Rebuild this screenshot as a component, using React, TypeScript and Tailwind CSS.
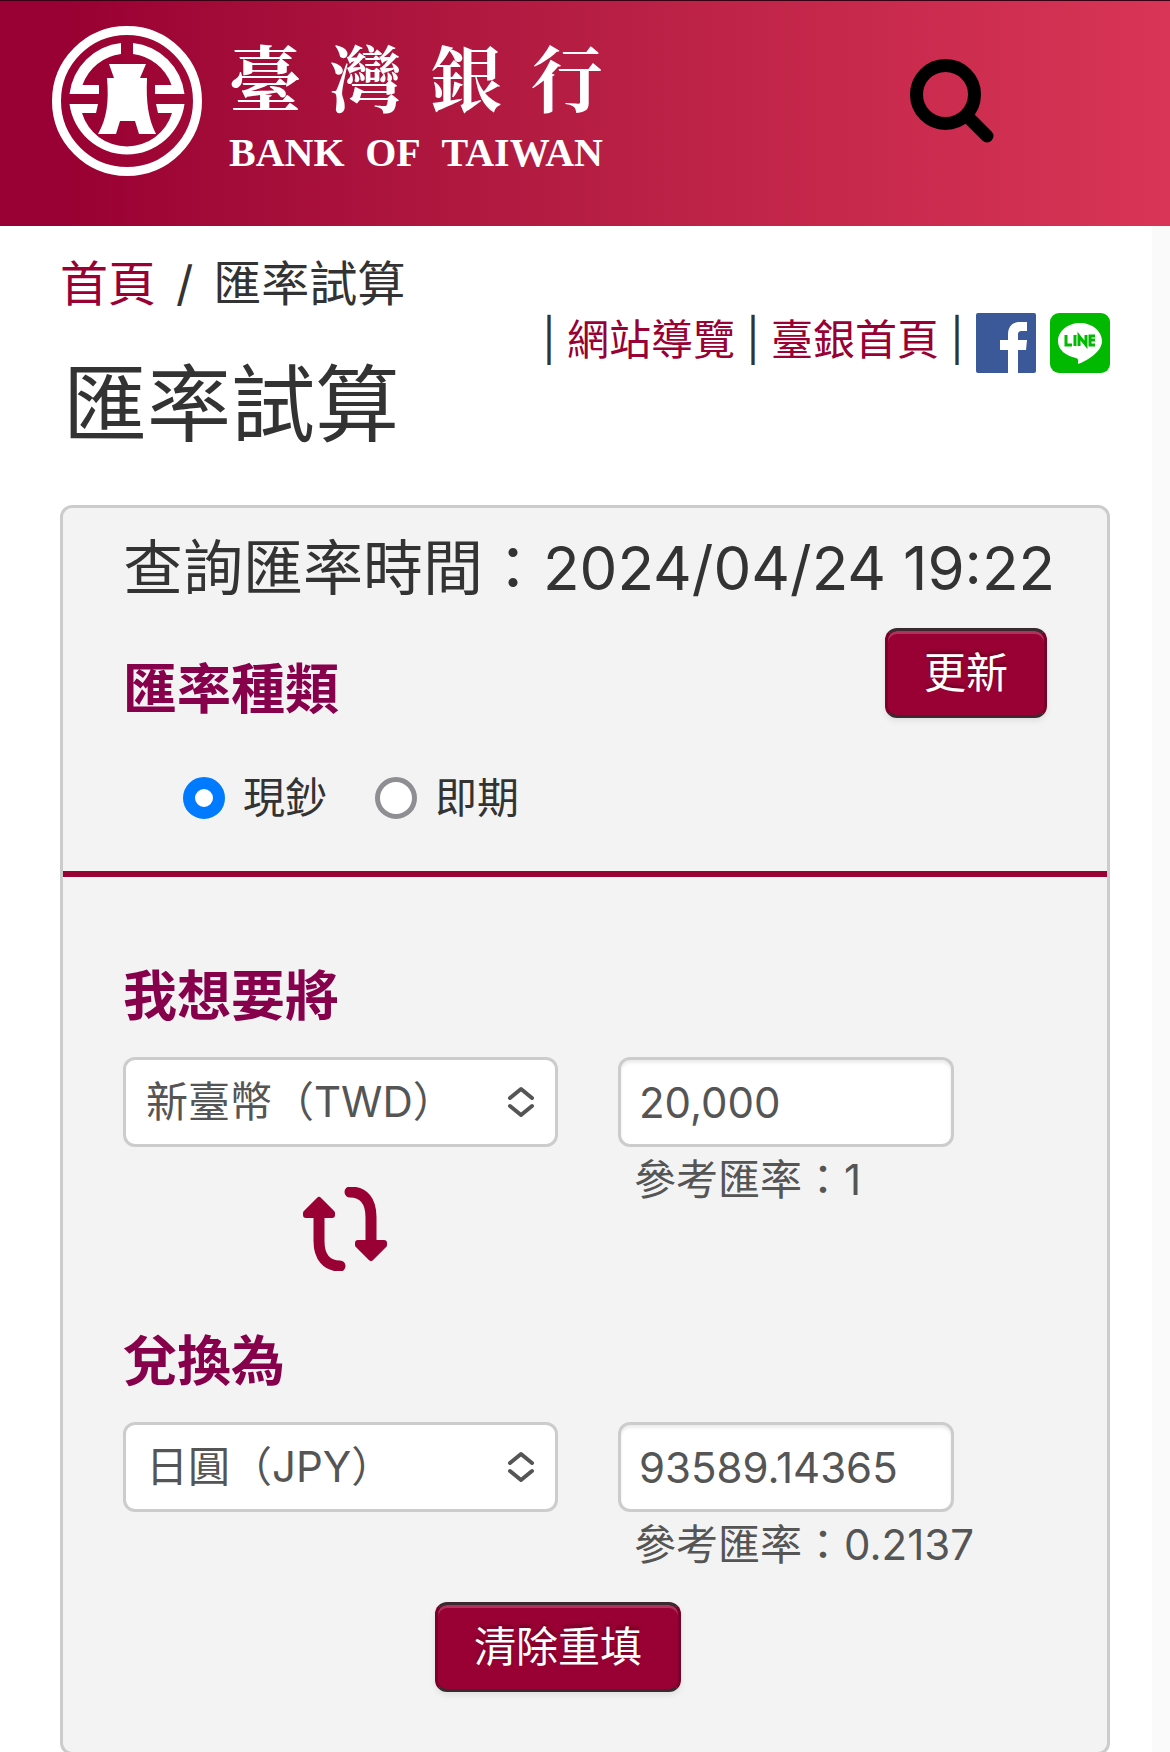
import { useState } from "react";
import type { ReactNode } from "react";

const currencies = ["新臺幣（TWD）", "日圓（JPY）"];

function BankEmblem() {
  return (
    <svg viewBox="0 0 152 150" className="h-[150px] w-[152px] shrink-0" fill="#fff" aria-hidden="true">
      <circle cx="76" cy="75" r="70.500" fill="none" stroke="#fff" strokeWidth="9" />
      {/* broken inner ring */}
      <path d="M70 17 A58 58 0 0 0 18.500 68 H48 V59 H31.500 A47 47 0 0 1 70 28 Z" />
      <path d="M82 17 A58 58 0 0 1 133.500 68 H104 V59 H120.500 A47 47 0 0 0 82 28 Z" />
      <path d="M18.500 78 H47 L45 87 H31 A47 47 0 0 0 121 87 H107 L105 78 H133.500 A58 58 0 0 1 18.500 78 Z" />
      {/* spade coin */}
      <path d="M58 38 H95 L89 52 H96 C95 76 97 92 105 108 H88 L84 95 H69 L65 108 H47 C56 92 58 76 56 52 H63 Z" />
    </svg>
  );
}

function SearchIcon() {
  return (
    <svg viewBox="0 0 84 84" className="h-[84px] w-[84px]" aria-hidden="true">
      <circle cx="35.500" cy="35.500" r="29" fill="none" stroke="#000" strokeWidth="13" />
      <path d="M57 57 L77 77" stroke="#000" strokeWidth="13" strokeLinecap="round" />
    </svg>
  );
}

function FacebookIcon() {
  return (
    <svg viewBox="0 0 60 60" className="h-[60px] w-[60px]" aria-hidden="true">
      <rect width="60" height="60" rx="2" fill="#3b5998" />
      <path
        fill="#fff"
        d="M32 60 V37 H24 V27 H32 V22 C32 13 37 9 44 9 H51 V18 H46 C43 18 42 19 42 22 V27 H51 L50 37 H42 V60 Z"
      />
    </svg>
  );
}

function LineIcon() {
  return (
    <svg viewBox="0 0 60 60" className="h-[60px] w-[60px]" aria-hidden="true">
      <rect width="60" height="60" rx="9" fill="#00b900" />
      <path
        fill="#fff"
        d="M30 10 C18 10 8 18 8 28 C8 37 16 43 26 45 C29 46 28 48 28 51 C34 49 52 40 52 28 C52 18 42 10 30 10 Z"
      />
      <g fill="none" stroke="#00b900" strokeWidth="3">
        <path d="M16 22 V32 H22" />
        <path d="M25 22 V33" />
        <path d="M29 33 V23 L36 32 V22" />
        <path d="M45 23 H40 V32 H45 M40 27 H45" />
      </g>
    </svg>
  );
}

function SwapIcon() {
  return (
    <svg viewBox="0 0 84 84" className="h-[84px] w-[84px]" aria-hidden="true">
      <g fill="none" stroke="#990033" strokeWidth="11" strokeLinecap="round">
        <path d="M16 26 V54 C16 70 24 79 37 79" />
        <path d="M47 5 C61 5 68 14 68 30 V58" />
      </g>
      <g fill="#990033" stroke="#990033" strokeWidth="6" strokeLinejoin="round">
        <path d="M16 13 L29 26 V28 H3 V26 Z" />
        <path d="M68 71 L81 58 V56 H55 V58 Z" />
      </g>
    </svg>
  );
}

function ActionButton({ children }: { children: ReactNode }) {
  return (
    <button
      type="button"
      className="h-[90px] rounded-xl border-[3px] border-x-[#7a0029] border-y-[#3a2a30] bg-[#990033] px-9 text-[42px] leading-[60px] text-white shadow-[inset_0_3px_0_rgba(255,255,255,0.2),0_3px_6px_rgba(0,0,0,0.08)] [text-shadow:0_-3px_3px_rgba(0,0,0,0.25)]"
    >
      {children}
    </button>
  );
}

function SectionTitle({ children }: { children: ReactNode }) {
  return <h2 className="text-[54px] leading-[60px] font-bold text-[#86004c]">{children}</h2>;
}

type CurrencyRowProps = {
  id: string;
  label: string;
  currency: string;
  amount: string;
  rate: string;
  children?: ReactNode;
};

function CurrencyRow({ id, label, currency, amount, rate, children }: CurrencyRowProps) {
  const [selected, setSelected] = useState(currency);
  const [value, setValue] = useState(amount);

  return (
    <div className="flex items-start gap-[60px] text-[#555]">
      <div className="flex w-[435px] flex-col gap-10">
        <div className="relative">
          <select
            id={`${id}-currency`}
            aria-label={`${label} 幣別`}
            value={selected}
            onChange={(e) => setSelected(e.target.value)}
            className="block h-[90px] w-full appearance-none rounded-xl border-[3px] border-[#ccc] bg-white px-5 text-[42px] leading-[60px]"
          >
            {currencies.map((name) => (
              <option key={name}>{name}</option>
            ))}
          </select>
          <svg
            viewBox="0 0 28 32"
            className="pointer-events-none absolute top-[29px] right-[23px] h-8 w-7"
            fill="none"
            stroke="#555"
            strokeWidth="4"
            strokeLinecap="round"
            strokeLinejoin="round"
            aria-hidden="true"
          >
            <path d="M3 12 L14 3 L25 12" />
            <path d="M3 20 L14 29 L25 20" />
          </svg>
        </div>
        {children}
      </div>
      <div>
        <input
          id={`${id}-amount`}
          aria-label={`${label} 金額`}
          type="text"
          value={value}
          onChange={(e) => setValue(e.target.value)}
          className="block h-[90px] w-[336px] rounded-xl border-[3px] border-[#ccc] bg-white px-[18px] text-[42px] leading-[60px] shadow-[inset_0_3px_3px_rgba(0,0,0,0.075)]"
        />
        <p className="pl-4 text-[42px] leading-[66px] whitespace-nowrap">參考匯率：{rate}</p>
      </div>
    </div>
  );
}

export default function App() {
  const [kind, setKind] = useState("cash");
  const radio =
    "h-[42px] w-[42px] appearance-none rounded-full border-[5px] border-[#8e8e93] bg-white checked:border-12 checked:border-[#007aff]";

  return (
    <div className="min-h-screen bg-white font-['Inter','Noto_Sans_CJK_TC',sans-serif] text-[#333]">
      <header className="flex h-[226px] items-start justify-between border-t border-[#3a0014] bg-linear-to-r from-[#990033] from-5% to-[#d93556] pt-[25px] pr-44 pl-[51px]">
        <a href="#" className="flex items-start gap-[26px] text-white" aria-label="臺灣銀行 BANK OF TAIWAN">
          <BankEmblem />
          <div className="w-[374px]">
            <div className="flex justify-between font-['Noto_Serif_CJK_TC','Noto_Sans_CJK_TC',serif] text-[72px] leading-[98px] font-bold">
              <span>臺</span>
              <span>灣</span>
              <span>銀</span>
              <span>行</span>
            </div>
            <div className="flex justify-between font-['Liberation_Serif',serif] text-[40px] leading-[58px] font-bold">
              <span>BANK</span>
              <span>OF</span>
              <span>TAIWAN</span>
            </div>
          </div>
        </a>
        <button type="button" aria-label="搜尋" className="mt-[33px]">
          <SearchIcon />
        </button>
      </header>

      <main className="border-r-[18px] border-[#fafafa] pr-[42px] pl-[60px]">
        <nav className="pt-[25px] text-[48px] leading-[66px]" aria-label="麵包屑">
          <a href="#" className="text-[#990033]">首頁</a>
          <span className="px-5">/</span>
          <span>匯率試算</span>
        </nav>

        <div className="flex items-start justify-between pb-[46px]">
          <h1 className="pt-[34px] pl-[3px] text-[84px] leading-[108px]">匯率試算</h1>
          <div className="-mt-1 flex items-start gap-3 text-[42px] leading-[54px]">
            <div className="flex gap-[11px]">
              <span>|</span>
              <a href="#" className="text-[#990033]">網站導覽</a>
              <span>|</span>
              <a href="#" className="text-[#990033]">臺銀首頁</a>
              <span>|</span>
            </div>
            <div className="flex gap-[14px]">
              <a href="#" aria-label="Facebook"><FacebookIcon /></a>
              <a href="#" aria-label="LINE"><LineIcon /></a>
            </div>
          </div>
        </div>

        <section className="rounded-xl border-[3px] border-[#ccc] bg-[#f3f3f3]">
          <div className="flex flex-col border-b-[6px] border-[#990033] px-[60px] pb-[43px]">
            <p className="pt-[21px] text-[60px] leading-[78px] whitespace-nowrap">查詢匯率時間：2024/04/24 19:22</p>
            <div className="flex items-start justify-between pt-[21px]">
              <div className="pt-8">
                <SectionTitle>匯率種類</SectionTitle>
              </div>
              <ActionButton>更新</ActionButton>
            </div>
            <div className="flex gap-12 pt-12 pl-[60px] text-[42px] leading-[60px]">
              <label className="flex items-center gap-[18px]">
                <input type="radio" name="kind" className={radio} checked={kind === "cash"} onChange={() => setKind("cash")} />
                現鈔
              </label>
              <label className="flex items-center gap-[18px]">
                <input type="radio" name="kind" className={radio} checked={kind === "spot"} onChange={() => setKind("spot")} />
                即期
              </label>
            </div>
          </div>

          <div className="flex flex-col px-[60px] pt-[90px] pb-[60px]">
            <SectionTitle>我想要將</SectionTitle>
            <div className="pt-[30px]">
              <CurrencyRow id="from" label="我想要將" currency="新臺幣（TWD）" amount="20,000" rate="1">
                <button type="button" aria-label="交換幣別" className="ml-[180px] w-[84px]">
                  <SwapIcon />
                </button>
              </CurrencyRow>
            </div>
            <div className="pt-[61px]">
              <SectionTitle>兌換為</SectionTitle>
            </div>
            <div className="pt-[30px]">
              <CurrencyRow id="to" label="兌換為" currency="日圓（JPY）" amount="93589.14365" rate="0.2137" />
            </div>
            <div className="pt-6 pl-[312px]">
              <ActionButton>清除重填</ActionButton>
            </div>
          </div>
        </section>
      </main>
    </div>
  );
}
